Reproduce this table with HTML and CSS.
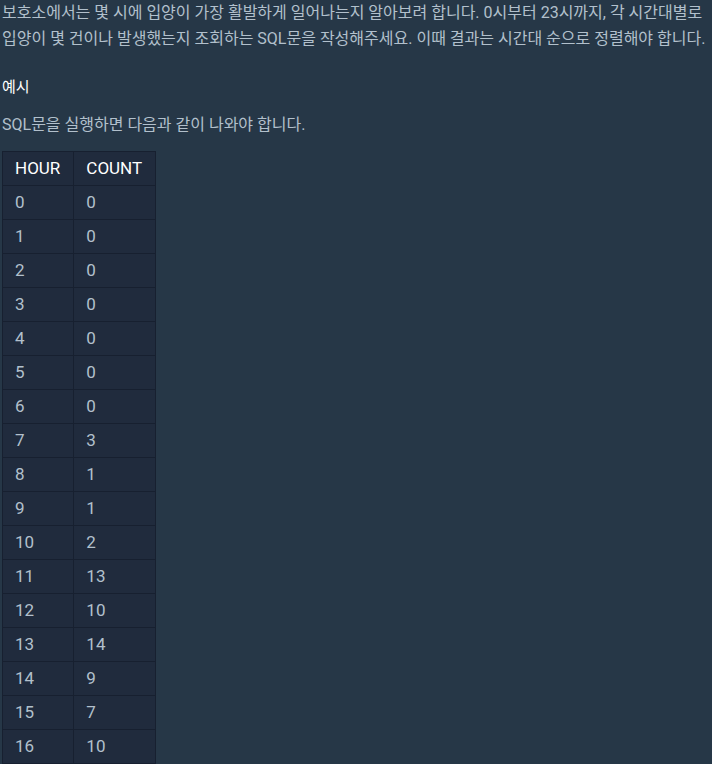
FILE: index.html
```html
<!DOCTYPE html>
<html>

<head>
    <title>입양 시각 구하기</title>
    <link rel="stylesheet" href="styles.css">
</head>

<body>
    <div class="guide">
        <p class="desc">보호소에서는 몇 시에 입양이 가장 활발하게 일어나는지 알아보려 합니다. 0시부터 23시까지, 각 시간대별로 입양이 몇 건이나 발생했는지 조회하는 SQL문을 작성해주세요. 이때 결과는 시간대 순으로 정렬해야 합니다.</p>

        <h5>예시</h5>

        <p class="sub">SQL문을 실행하면 다음과 같이 나와야 합니다.</p>

        <table>
            <thead>
                <tr>
                    <th>HOUR</th>
                    <th>COUNT</th>
                </tr>
            </thead>
            <tbody>
                <tr><td>0</td><td>0</td></tr>
                <tr><td>1</td><td>0</td></tr>
                <tr><td>2</td><td>0</td></tr>
                <tr><td>3</td><td>0</td></tr>
                <tr><td>4</td><td>0</td></tr>
                <tr><td>5</td><td>0</td></tr>
                <tr><td>6</td><td>0</td></tr>
                <tr><td>7</td><td>3</td></tr>
                <tr><td>8</td><td>1</td></tr>
                <tr><td>9</td><td>1</td></tr>
                <tr><td>10</td><td>2</td></tr>
                <tr><td>11</td><td>13</td></tr>
                <tr><td>12</td><td>10</td></tr>
                <tr><td>13</td><td>14</td></tr>
                <tr><td>14</td><td>9</td></tr>
                <tr><td>15</td><td>7</td></tr>
                <tr><td>16</td><td>10</td></tr>
            </tbody>
        </table>
    </div>
</body>

</html>
```

FILE: styles.css
```css
* {
    margin: 0;
    box-sizing: border-box;
}

body {
    background-color: #263747;
    color: #b2c0cc;
    font-family: Roboto, "Noto Sans CJK KR", sans-serif;
    font-size: 16px;
    overflow: hidden;
}

.guide {
    padding: 0 2px;
}

.desc {
    line-height: 26px;
}

h5 {
    margin-top: 22px;
    font-size: 15px;
    font-weight: 400;
    line-height: 26px;
    color: #fff;
}

.sub {
    margin-top: 12px;
    line-height: 26px;
}

table {
    margin-top: 13px;
    border-collapse: collapse;
    background-color: #202b3d;
}

th,
td {
    border: 1px solid #172030;
    padding: 4px 13px 4px 12px;
    font-size: 17px;
    line-height: 25px;
    text-align: left;
    font-weight: 400;
}

th {
    color: #fff;
}
```
